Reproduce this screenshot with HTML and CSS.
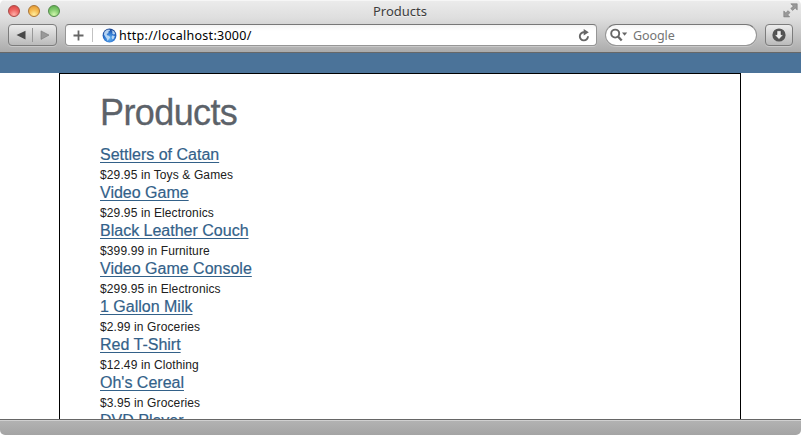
FILE: index.html
```html
<!DOCTYPE html>
<html lang="en">
<head>
<meta charset="utf-8">
<title>Products</title>
<link rel="stylesheet" href="styles.css">
</head>
<body>
<div class="window">
  <header class="chrome">
    <div class="titlebar">
      <div class="lights"><i class="light red"></i><i class="light amber"></i><i class="light green"></i></div>
      <div class="title"><span>Products</span></div>
      <svg class="expand" width="15" height="15" viewBox="0 0 15 15"><path fill="#999" stroke="#777" stroke-width=".6" d="M7.800.8h6.400v6.100l-2-1.900-2.500 2.400-1.900-1.800 2.500-2.500zM.8 8l2 1.900 2.300-2.200 1.900 1.900L4.700 11.900l2 2H.8z"/></svg>
    </div>
    <div class="toolbar">
      <div class="nav">
        <div class="half"><svg width="10" height="10" viewBox="0 0 10 10"><path fill="#484848" d="M9.500.7v8.900L.5 5.100z"/></svg></div>
        <div class="half forward"><svg width="10" height="10" viewBox="0 0 10 10"><path fill="#999" stroke="#777" stroke-width=".6" d="M1 .9v8.500l8-4.300z"/></svg></div>
      </div>
      <div class="address">
        <div class="add"><svg width="11" height="11" viewBox="0 0 11 11"><path stroke="#666" stroke-width="1.800" d="M5.500.5v10M.5 5.500h10"/></svg></div>
        <svg class="globe" width="15" height="15" viewBox="0 0 15 15">
          <defs><radialGradient id="sea" cx=".5" cy=".7" r=".65"><stop offset="0" stop-color="#65b5f2"/><stop offset=".6" stop-color="#2c73cf"/><stop offset="1" stop-color="#174594"/></radialGradient></defs>
          <circle cx="7.500" cy="7.500" r="6.900" fill="url(#sea)"/>
          <path fill="#c4def6" opacity=".9" d="M2.500 3.800 5 1.800l2.500-.3.500 1.300-1.800 1 .4 1.300-2 .8.600 1.400 2.100.6.800 1.500-1.500 2-1 1.500-.9-2.500-1.500-2-1.300-1.800zM9.500 2l2.600 1.400 1.200 2.600-1.600.4-1.500-.9.300-1.500zM10 7.500l2.800.5-.9 2.600-1.500 1-.8-2z"/>
        </svg>
        <span class="url">http://localhost:3000/</span>
        <svg class="reload" width="12" height="13" viewBox="0 0 12 13"><path fill="none" stroke="#666" stroke-width="1.900" d="M10 7.300A4.100 4.100 0 1 1 6.300 3.200"/><path fill="#666" d="M5.700 0 10.800 3.300 5.700 6.400z"/></svg>
      </div>
      <div class="search">
        <svg width="19" height="14" viewBox="0 0 19 14"><circle cx="5.200" cy="5.600" r="4" fill="none" stroke="#666" stroke-width="1.900"/><path stroke="#666" stroke-width="2.300" d="m8 8.500 3.700 4"/><path fill="#666" d="M12 4.500h5.200l-2.600 3.300z"/></svg>
        <span>Google</span>
      </div>
      <div class="downloads"><svg width="14" height="14" viewBox="0 0 14 14"><circle cx="7" cy="7" r="6.600" fill="#555"/><path fill="#eee" stroke="#333" stroke-width=".5" d="M5 2.700h4v4h2.500L7 11.400 2.500 6.700H5z"/></svg></div>
    </div>
  </header>
  <main class="page">
    <div class="container">
      <h1>Products</h1>
      <div class="product"><a href="#">Settlers of Catan</a><p>$29.95 in Toys &amp; Games</p></div>
      <div class="product"><a href="#">Video Game</a><p>$29.95 in Electronics</p></div>
      <div class="product"><a href="#">Black Leather Couch</a><p>$399.99 in Furniture</p></div>
      <div class="product"><a href="#">Video Game Console</a><p>$299.95 in Electronics</p></div>
      <div class="product"><a href="#">1 Gallon Milk</a><p>$2.99 in Groceries</p></div>
      <div class="product"><a href="#">Red T-Shirt</a><p>$12.49 in Clothing</p></div>
      <div class="product"><a href="#">Oh's Cereal</a><p>$3.95 in Groceries</p></div>
      <div class="product"><a href="#">DVD Player</a></div>
    </div>
  </main>
  <footer class="status"></footer>
</div>
</body>
</html>
```
FILE: styles.css
```css
* { box-sizing: border-box; }
body { margin: 0; background: #fff; overflow: hidden; font-family: "Liberation Sans", Arial, sans-serif; }
.window { width: 801px; height: 435px; display: flex; flex-direction: column; overflow: hidden; border-radius: 5px; background: #fff; }
.chrome { height: 53px; flex: none; background: linear-gradient(#ececec, #dedede 35%, #ababab); border-bottom: 1px solid #686868; box-shadow: inset 0 1px #f6f6f6; font-family: "Noto Sans", sans-serif; }
.titlebar { height: 24px; display: grid; grid-template-columns: 100px 1fr 100px; }
.lights { display: flex; gap: 8px; padding: 5px 0 0 8px; }
.light { width: 12px; height: 12px; border-radius: 50%; border: 1px solid; }
.red { background: radial-gradient(circle at 50% 85%, #ffb0a9, #ee6562 50%, #d6413f); border-color: #a84946; }
.amber { background: radial-gradient(circle at 50% 85%, #ffee9e, #f5b950 50%, #df912b); border-color: #aa7434; }
.green { background: radial-gradient(circle at 50% 85%, #d1f7ad, #85cc70 50%, #55a846); border-color: #52884a; }
.title { text-align: center; font-size: 13px; line-height: 18px; padding: 2px 1px 0 0; color: #3d3d3d; text-shadow: 0 1px #f0f0f0; }
.expand { justify-self: end; margin: 3px 3px 0 0; }
.toolbar { display: flex; padding-left: 8px; }
.nav, .downloads { height: 22px; border: 1px solid #7c7c7c; border-radius: 4px; background: linear-gradient(#ececec, #bababa); box-shadow: 0 1px #c9c9c9; display: flex; }
.nav { width: 49px; padding: 3px 0; margin-right: 8px; }
.half { flex: 1; display: flex; align-items: center; justify-content: center; }
.forward { border-left: 1px solid #989898; }
.address, .search { height: 22px; border: 1px solid #969696; border-top-color: #777; background: linear-gradient(#f4f4f4, #fff 30%); box-shadow: 0 1px #c9c9c9; display: flex; align-items: center; }
.address { width: 532px; border-radius: 4px; }
.add { width: 27px; height: 14px; padding: 1px 0 0 7px; border-right: 1px solid #c2c2c2; display: flex; align-items: center; }
.globe { margin-left: 9px; }
.url { margin: 1px 0 0 2px; font-size: 12.500px; line-height: 18px; letter-spacing: .28px; color: #000; }
.reload { margin: 0 6px 0 auto; }
.search { width: 152px; margin-left: 8px; padding-left: 4px; border-radius: 11px; font-size: 12.500px; line-height: 18px; color: #747474; }
.search span { margin: 1px 0 0 4px; letter-spacing: -.1px; }
.downloads { width: 28px; margin-left: 8px; align-items: center; justify-content: center; }
.page { flex: 1; min-height: 0; overflow: hidden; border-top: 20px solid #4b7399; }
.container { width: 682px; height: 500px; margin-left: 59px; border: 1px solid #000; padding: 17px 40px; }
h1 { margin: 0 0 10px; font-size: 36px; line-height: 44px; font-weight: 400; letter-spacing: -.6px; color: #5c6269; -webkit-text-stroke: .3px; }
.product { height: 38px; }
.product a { display: block; width: max-content; font-size: 16px; line-height: 20px; color: #336189; -webkit-text-stroke: .2px; text-decoration: underline; text-decoration-thickness: 1px; text-underline-offset: 2px; }
.product p { margin: 0; padding-top: 1px; font-size: 12px; line-height: 17px; letter-spacing: .12px; color: #202020; }
.product p { line-height: 18px; }
.status { height: 16px; flex: none; border-top: 1px solid #666; background: linear-gradient(#b3b3b3, #a4a4a4); box-shadow: inset 0 1px #d0d0d0; }
```
